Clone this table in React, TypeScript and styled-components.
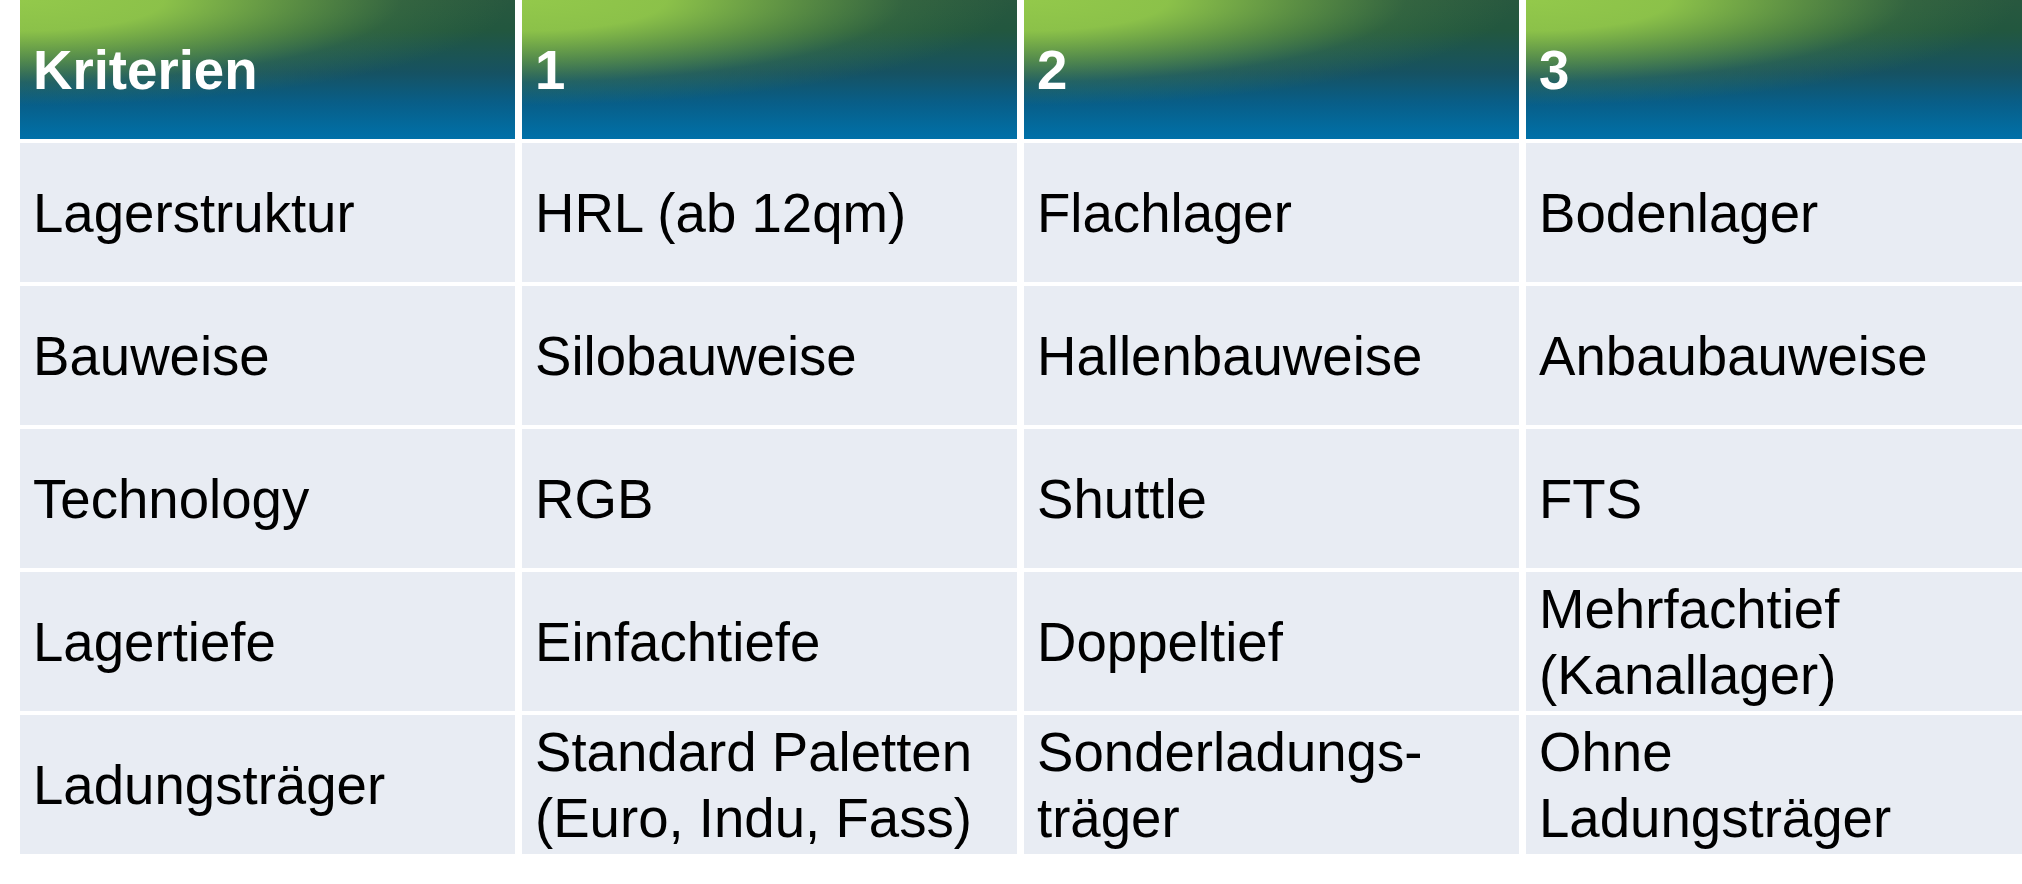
import styled, { createGlobalStyle } from 'styled-components';

const Global = createGlobalStyle`
  html, body {
    margin: 0;
    padding: 0;
    background: #ffffff;
  }
  body {
    font-family: "Liberation Sans", Arial, sans-serif;
  }
`;

const Page = styled.div`
  padding: 0 0 0 20px;
  width: 2022px;
  height: 884px;
  box-sizing: border-box;
  overflow: hidden;
`;

const Table = styled.div`
  display: grid;
  grid-template-columns: 495px 495px 495px 496px;
  grid-auto-rows: 139px;
  column-gap: 7px;
  row-gap: 4px;
`;

const HeadCell = styled.div`
  display: flex;
  align-items: center;
  padding: 2px 13px 0;
  color: #ffffff;
  font-weight: 700;
  font-size: 54.6px;
  background:
    radial-gradient(720px 155px at 0% 0%, rgba(147, 201, 75, 1) 0%, rgba(145, 199, 74, 0.95) 20%, rgba(125, 178, 70, 0.6) 38%, rgba(95, 145, 68, 0.22) 53%, rgba(80, 130, 68, 0) 68%),
    linear-gradient(180deg, #28583f 0%, #22573f 22%, #165262 52%, #085e88 74%, #0071a9 100%);
`;

const Cell = styled.div`
  display: flex;
  align-items: center;
  padding: 2px 13px 0;
  background: #e8ecf3;
  color: #000000;
  font-size: 54.6px;
  line-height: 66px;
`;

const Lines = styled.span`
  white-space: pre-line;
`;

const header = ['Kriterien', '1', '2', '3'];

const rows: string[][] = [
  ['Lagerstruktur', 'HRL (ab 12qm)', 'Flachlager', 'Bodenlager'],
  ['Bauweise', 'Silobauweise', 'Hallenbauweise', 'Anbaubauweise'],
  ['Technology', 'RGB', 'Shuttle', 'FTS'],
  ['Lagertiefe', 'Einfachtiefe', 'Doppeltief', 'Mehrfachtief\n(Kanallager)'],
  ['Ladungsträger', 'Standard Paletten\n(Euro, Indu, Fass)', 'Sonderladungs-\nträger', 'Ohne\nLadungsträger'],
];

export default function App() {
  return (
    <>
      <Global />
      <Page>
        <Table>
          {header.map((h) => (
            <HeadCell key={h}>{h}</HeadCell>
          ))}
          {rows.map((r, i) =>
            r.map((c, j) => (
              <Cell key={i + '-' + j}>
                <Lines>{c}</Lines>
              </Cell>
            ))
          )}
        </Table>
      </Page>
    </>
  );
}
